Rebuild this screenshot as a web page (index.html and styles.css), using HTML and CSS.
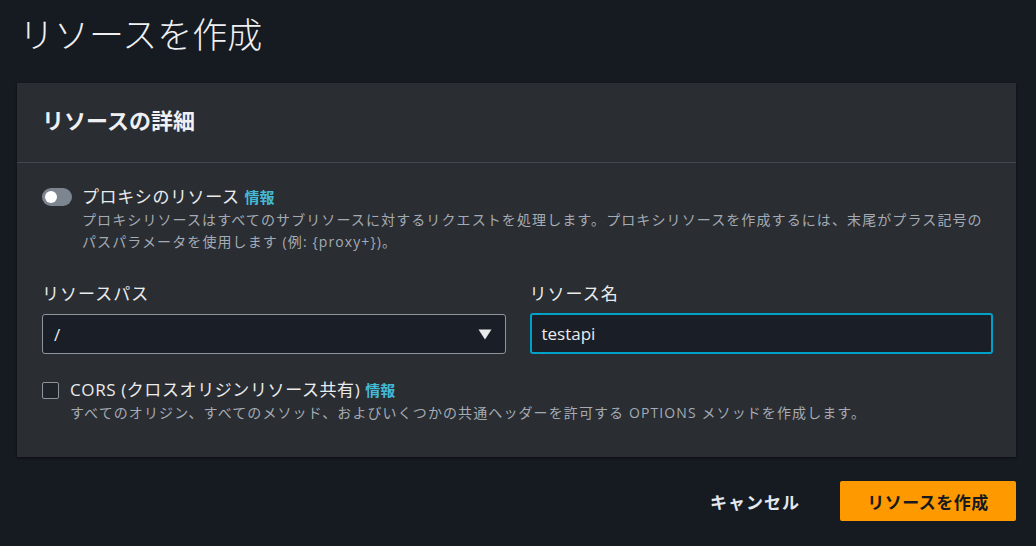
FILE: index.html
```html
<!DOCTYPE html>
<html lang="ja">
<head>
<meta charset="utf-8">
<link rel="stylesheet" href="styles.css">
</head>
<body>
<div class="page">
  <h1 class="title">リソースを作成</h1>
  <section class="panel">
    <header class="panel-head">
      <h2>リソースの詳細</h2>
    </header>
    <div class="panel-body">
      <div class="option">
        <span class="toggle"><span class="knob"></span></span>
        <div class="option-text">
          <div class="option-label">プロキシのリソース <a class="info">情報</a></div>
          <div class="option-desc">プロキシリソースはすべてのサブリソースに対するリクエストを処理します。プロキシリソースを作成するには、末尾がプラス記号のパスパラメータを使用します (例: {proxy+})。</div>
        </div>
      </div>
      <div class="fields">
        <div class="field">
          <label class="field-label">リソースパス</label>
          <div class="select">
            <span class="select-value">/</span>
            <svg class="caret" width="14" height="11" viewBox="0 0 14 11"><path d="M0.5 0.5 H13.5 L7 10.5 Z" fill="#e9ebed"/></svg>
          </div>
        </div>
        <div class="field">
          <label class="field-label">リソース名</label>
          <div class="input focused">testapi</div>
        </div>
      </div>
      <div class="option cors">
        <span class="checkbox"></span>
        <div class="option-text">
          <div class="option-label">CORS (クロスオリジンリソース共有) <a class="info">情報</a></div>
          <div class="option-desc">すべてのオリジン、すべてのメソッド、およびいくつかの共通ヘッダーを許可する OPTIONS メソッドを作成します。</div>
        </div>
      </div>
    </div>
  </section>
  <div class="actions">
    <button class="btn-link">キャンセル</button>
    <button class="btn-primary">リソースを作成</button>
  </div>
</div>
</body>
</html>
```
FILE: styles.css
```css
* { box-sizing: border-box; }
html, body { margin: 0; padding: 0; }
body {
  background: #161a21;
  color: #e9ebed;
  font-family: "Open Sans", "Noto Sans CJK JP", sans-serif;
  width: 1036px;
  height: 546px;
  overflow: hidden;
}
.page {
  padding: 12px 20px 0 17px;
}
.title {
  margin: 0 0 0 2px;
  font-weight: 300;
  font-size: 35px;
  line-height: 46px;
  height: 71px;
  color: #eef0f2;
}
.panel {
  background: #2a2d32;
  box-shadow: 0 1px 2px rgba(0,0,0,0.5);
}
.panel-head {
  height: 80px;
  border-bottom: 1px solid #414750;
  padding: 22px 25px 0;
}
.panel-head h2 {
  margin: 0;
  font-size: 22px;
  font-weight: 700;
  line-height: 30px;
  color: #eef0f2;
}
.panel-body {
  padding: 22px 23px 33px 25px;
}
.option {
  display: flex;
  gap: 10px;
}
.toggle {
  flex: none;
  width: 30px;
  height: 18px;
  border-radius: 9px;
  background: #7d8590;
  margin-top: 3px;
  position: relative;
}
.knob {
  position: absolute;
  left: 3px;
  top: 3px;
  width: 12px;
  height: 12px;
  border-radius: 50%;
  background: #ffffff;
}
.option-label {
  font-size: 17px;
  line-height: 24px;
  letter-spacing: 0.6px;
  color: #e9ebed;
}
.info {
  color: #44b9d6;
  font-weight: 700;
  font-size: 15px;
  letter-spacing: 0;
}
.option-desc {
  font-size: 14px;
  line-height: 22px;
  letter-spacing: 1.1px;
  color: #a4abb4;
  max-width: 905px;
}
.fields {
  display: grid;
  grid-template-columns: 1fr 1fr;
  gap: 24px;
  margin-top: 29px;
}
.field-label {
  display: block;
  font-size: 17px;
  line-height: 24px;
  letter-spacing: 1px;
  color: #e9ebed;
  margin-bottom: 8px;
}
.select, .input {
  height: 40px;
  background: #1a1f27;
  border: 1px solid #8d949c;
  border-radius: 3px;
  display: flex;
  align-items: center;
  font-size: 17px;
}
.select {
  justify-content: space-between;
  padding: 0 13px 0 11px;
}
.caret { display: block; }
.input.focused {
  border: 2px solid #00a1c9;
  padding-left: 10px;
  height: 41px;
  margin-top: -1px;
}
.cors {
  margin-top: 24px;
  gap: 11px;
}
.checkbox {
  flex: none;
  width: 17px;
  height: 17px;
  border: 1px solid #8d949c;
  border-radius: 2px;
  background: #1f232a;
  margin-top: 4px;
}
.actions {
  display: flex;
  justify-content: flex-end;
  align-items: center;
  gap: 40px;
  margin-top: 24px;
}
.btn-link, .btn-primary {
  font-family: inherit;
  font-size: 17px;
  font-weight: 700;
  border: none;
  cursor: pointer;
}
.btn-link {
  background: none;
  color: #e4e8ee;
  padding: 0;
  letter-spacing: 1px;
}
.btn-primary {
  background: #ff9900;
  color: #16191f;
  width: 176px;
  height: 40px;
  border-radius: 2px;
  letter-spacing: 0.5px;
}
```
